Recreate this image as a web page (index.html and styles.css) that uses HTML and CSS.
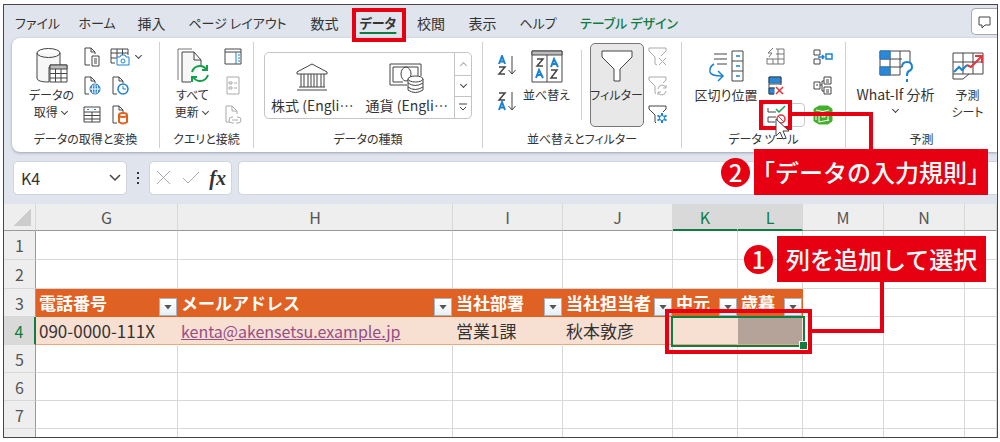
FILE: index.html
```html
<!DOCTYPE html>
<html lang="ja">
<head>
<meta charset="utf-8">
<title>データ - Excel</title>
<link rel="stylesheet" href="styles.css">
</head>
<body>
<main class="window">
  <nav class="tabs">
    <div class="tab-list">
      <button class="tab tab-kana">ファイル</button>
      <button class="tab tab-kana">ホーム</button>
      <button class="tab">挿入</button>
      <button class="tab tab-kana">ページ レイアウト</button>
      <button class="tab">数式</button>
      <button class="tab tab-kana tab-active">データ</button>
      <button class="tab">校閲</button>
      <button class="tab">表示</button>
      <button class="tab tab-kana">ヘルプ</button>
      <button class="tab tab-kana tab-context">テーブル デザイン</button>
    </div>
    <button class="comment" aria-label="コメント">
      <svg width="14" height="14" viewBox="0 0 14 14"><path d="M1 2h11v8H7l-3 3v-3H1z"/></svg>
    </button>
  </nav>

  <section class="ribbon">
    <div class="group">
      <div class="group-body">
        <button class="big">
          <span class="big-icon"><svg width="34" height="38" viewBox="0 0 34 38"><path class="pale" d="M2 6v25c0 3 5 4 12 4V20h11V6"/><ellipse cx="13.500" cy="6" rx="11.500" ry="4.500"/><path class="paper" d="M15 18h17v17H15z"/><path class="dim" d="M15 18h17v4H15z"/><path d="M15 26.500h17M15 31h17M20.500 22v13M26 22v13"/></svg></span>
          <span>データの</span>
          <span>取得 <i class="chev"></i></span>
        </button>
        <div class="smalls smalls-three">
          <button class="small" aria-label="テキストから"><svg width="18" height="20" viewBox="0 0 18 20"><path d="M7 18H2V1h6l4 4v2M8 1v4h4"/><path class="paper" d="M9 9h7v10H9z"/><path d="M11 12h3M11 14h3M11 16h3"/></svg></button>
          <button class="small" aria-label="画像から"><svg width="20" height="18" viewBox="0 0 20 18"><path d="M5 15H1V1h17v6M1 5h17M1 10h6M7 1v8M12.500 1v6"/><path class="blue-line paper" d="M7 9h3l1-2h4l1 2h3v8H7z"/><circle class="blue-line" cx="13" cy="13" r="2"/></svg></button>
          <i class="chev"></i>
          <button class="small" aria-label="Web から"><svg width="18" height="20" viewBox="0 0 18 20"><path d="M6 18H2V1h6l4 4v2M8 1v4h4"/><circle class="blue" cx="12" cy="13" r="5"/><path class="white-line" d="M7 13h10M12 8v10M10 9q-2 4 0 8M14 9q2 4 0 8"/></svg></button>
          <button class="small" aria-label="最近使ったソース"><svg width="18" height="20" viewBox="0 0 18 20"><path d="M6 18H2V1h6l4 4v2M8 1v4h4"/><circle class="blue-line paper bold-thin" cx="12" cy="13" r="5"/><path class="blue-line" d="M12 10v3h3"/></svg></button>
          <span></span>
          <button class="small" aria-label="テーブルから"><svg width="18" height="18" viewBox="0 0 18 18"><path d="M1 1h16v15H1zM1 6h16M1 9.500h16M1 13h16M9 6v10"/><path class="blue-line" d="M4 3.500h2M11 3.500h2"/></svg></button>
          <button class="small" aria-label="既存の接続"><svg width="18" height="20" viewBox="0 0 18 20"><path d="M6 18H2V1h6l4 4v2M8 1v4h4"/><path class="orange-line paper" d="M8 10v7q4 3 8 0v-7"/><ellipse class="orange-line paper" cx="12" cy="10" rx="4" ry="2"/></svg></button>
        </div>
      </div>
      <div class="group-name">データの取得と変換</div>
    </div>

    <div class="group">
      <div class="group-body">
        <button class="big">
          <span class="big-icon"><svg width="32" height="36" viewBox="0 0 32 36"><path class="dim-line" d="M1 32V1h14"/><path class="pale" d="M14 34H5V4h12l7 8v6"/><path d="M17 4v8h7"/><path class="green-line" d="M15 24q2-6 8-6 4 0 7 4M30 17v5h-5M31 27q-2 6-8 6-4 0-7-4M15 34v-5h5"/></svg></span>
          <span>すべて</span>
          <span>更新 <i class="chev"></i></span>
        </button>
        <div class="smalls">
          <button class="small" aria-label="クエリと接続"><svg width="18" height="17" viewBox="0 0 18 17"><path d="M1 1h16v15H1zM1 4h16"/><path class="blue-line" d="M12 4v12M14 7h2M14 10h2M14 13h2"/></svg></button>
          <button class="small" aria-label="プロパティ"><svg class="off" width="14" height="19" viewBox="0 0 14 19"><path d="M1 1h12v17H1zM3 6h3v2H3zM3 11h3v2H3zM8 7h3M8 12h3"/></svg></button>
          <button class="small" aria-label="リンクの編集"><svg class="off" width="18" height="20" viewBox="0 0 18 20"><path d="M6 17H2V1h6l5 5v3M8 1v5h5"/><path d="M9 12H8q-3 0-3 3t3 3h2M13 12h1q3 0 3 3t-3 3h-2M8 15h6"/></svg></button>
        </div>
      </div>
      <div class="group-name">クエリと接続</div>
    </div>

    <div class="group">
      <div class="group-body">
        <div class="gallery">
          <button class="type"><svg width="34" height="30" viewBox="0 0 34 30"><path d="M2 10 17 2l15 8v2H2zM6 12v13M9 12v13M13 12v13M16 12v13M19 12v13M22 12v13M26 12v13M29 12v13M4 25h26M2 28h30"/></svg><span>株式 (Engli…</span></button>
          <button class="type"><svg width="36" height="32" viewBox="0 0 36 32"><path d="M18 23H1V2h31v12M14 20H4V5h25v9"/><ellipse cx="17" cy="12" rx="5" ry="7"/><path class="paper" d="M19 17v11q7 5 15 0V17"/><ellipse class="paper" cx="26.500" cy="17" rx="7.500" ry="3"/><path d="M19 21q7 5 15 0M19 25q7 5 15 0"/></svg><span>通貨 (Engli…</span></button>
          <div class="scroller">
            <button aria-label="上へ"><i class="chev chev-up"></i></button>
            <button aria-label="下へ"><i class="chev"></i></button>
            <button aria-label="その他"><svg width="10" height="9" viewBox="0 0 10 9"><path d="M1 1h8M2 4l3 3 3-3"/></svg></button>
          </div>
        </div>
      </div>
      <div class="group-name">データの種類</div>
    </div>

    <div class="group">
      <div class="group-body">
        <div class="sorts">
          <button class="small" aria-label="昇順"><svg width="20" height="22" viewBox="0 0 20 22"><path class="blue-line bold" d="M2 9 5 1l3 8M3 6.500h4"/><path class="bold-thin" d="M2 12h6l-6 7h6"/><path d="M15 1v17M11.500 15l3.500 4 3.500-4"/></svg></button>
          <button class="small" aria-label="降順"><svg width="20" height="22" viewBox="0 0 20 22"><path class="bold-thin" d="M2 2h6L2 9h6"/><path class="blue-line bold" d="M2 19l3-8 3 8M3 16.500h4"/><path d="M15 1v17M11.500 15l3.500 4 3.500-4"/></svg></button>
        </div>
        <button class="big">
          <span class="big-icon"><svg width="32" height="33" viewBox="0 0 32 33"><path d="M1 1h30v31H1zM16 5v27"/><path class="dim" d="M1 1h30v4H1z"/><path class="bold-thin" d="M6 9h6l-6 7h6M20 20h6l-6 8h6"/><path class="blue-line bold" d="M20 17l3-8 4 8M21 14h5M5 28l3-8 4 8M6 25h5"/></svg></span>
          <span>並べ替え</span>
        </button>
        <i class="rule"></i>
        <button class="big big-pressed">
          <span class="big-icon"><svg width="32" height="34" viewBox="0 0 32 34"><path class="paper" d="M1 2h30v6L19 20v12h-6V20L1 8z"/></svg></span>
          <span>フィルター</span>
        </button>
        <div class="smalls">
          <button class="small" aria-label="クリア"><svg class="off" width="20" height="20" viewBox="0 0 20 20"><path d="M9 18l-2-1v-7L1 4V1h17v3l-5 5"/><path d="M11 11l7 7M18 11l-7 7"/></svg></button>
          <button class="small" aria-label="再適用"><svg class="off" width="20" height="20" viewBox="0 0 20 20"><path d="M8 18l-1-1v-7L1 4V1h17v3l-3 3"/><path d="M10 13q1-4 4-4t4 3v-3M18 12h-3M18 15q-1 4-4 4t-4-3v3M10 16h3"/></svg></button>
          <button class="small" aria-label="詳細設定"><svg width="20" height="20" viewBox="0 0 20 20"><path d="M8 18l-1-1v-7L1 4V1h17v3l-3 3"/><path class="blue-line bold" d="M14 8v10M9.500 10.500l9 5M9.500 15.500l9-5"/><circle class="blue-line paper" cx="14" cy="13" r="2.500"/></svg></button>
        </div>
      </div>
      <div class="group-name">並べ替えとフィルター</div>
    </div>

    <div class="group">
      <div class="group-body">
        <button class="big big-wide">
          <span class="big-icon"><svg width="36" height="34" viewBox="0 0 36 34"><path d="M6 5h13M6 10h13M9 15h10M24 2h11v30H24zM24 12h11M24 22h11"/><path class="blue-line bold-thin" d="M28 7h4M28 17h4M28 27h4M6 15q-5 3-4 8 1 4 12 4M10 22l5 5-5 5"/></svg></span>
          <span>区切り位置</span>
        </button>
        <div class="smalls smalls-two">
          <button class="small" aria-label="フラッシュ フィル"><svg class="off off-dark" width="20" height="20" viewBox="0 0 20 20"><path d="M10 2h8v15H1v-6M1 12h17M7 12v5M12 2v15M10 7h8M7 1 2 6h4L3 10"/></svg></button>
          <button class="small" aria-label="統合"><svg width="20" height="18" viewBox="0 0 20 18"><path d="M1 2h6v5H1zM1 11h6v5H1z"/><path class="blue-line bold-thin" d="M5 9h6M9 7l2 2-2 2M13 6h6v5h-6z"/></svg></button>
          <button class="small" aria-label="重複の削除"><svg width="18" height="20" viewBox="0 0 18 20"><path class="blue" d="M2 1h12v6H2zM2 12h5v6H2z"/><path d="M2 1h12v8M2 1v17h5M2 8h12M2 12h6"/><path class="red-line bold-thin" d="M9 11l7 7M16 11l-7 7"/></svg></button>
          <button class="small" aria-label="リレーションシップ"><svg width="20" height="20" viewBox="0 0 20 20"><path d="M1 6h6v7H1zM11 1h7v7h-7zM11 11h7v7h-7zM7 9h2M9 5v10M9 5h2M9 15h2M3 9h2M13 4h3M13 6h3M13 14h3M13 16h3"/></svg></button>
          <button class="small small-split" aria-label="データの入力規則"><svg width="20" height="20" viewBox="0 0 20 20"><path d="M9 7H1V3M9 12H1v5h7"/><path class="green-line bold-thin" d="M9 4l3 3 6-6"/><circle class="red-line bold-thin" cx="14" cy="14" r="4"/><path class="red-line" d="M11 11l6 6"/></svg></button>
          <button class="small" aria-label="データ モデル"><svg width="20" height="20" viewBox="0 0 20 20"><path class="lime" d="M1 4 6 1h9l4 3v12l-4 3H6l-5-3z"/><path class="white-line" d="M3 5q7 3 13 0M3 8v7M6 8v9l10-2M9 6v6h3V7M13 10h4M15 8v8"/></svg></button>
        </div>
      </div>
      <div class="group-name">データ ツール</div>
    </div>

    <div class="group">
      <div class="group-body">
        <button class="big big-whatif">
          <span class="big-icon"><svg width="36" height="36" viewBox="0 0 36 36"><path d="M2 3h30v12M2 11h22M2 19h22M2 27h20M12 3v24M22 3v24M2 3v24"/><path class="blue" d="M2 3h10v8H2zM2 19h10v8H2z"/><path class="blue-line bold" d="M24 19q0-5 5-5t5 5q0 3-3 4-2 1-2 5M29 31v3"/></svg></span>
          <span>What-If 分析</span>
          <i class="chev"></i>
        </button>
        <button class="big">
          <span class="big-icon"><svg width="34" height="32" viewBox="0 0 34 32"><path d="M2 3h30v21H18l-6 5H2zM2 12h30M2 24h16M12 3v21M22 3v21"/><path class="blue-line bold" d="m3 22 5-5 3 3 5-5"/><path class="red-line bold" d="m16 15 4 2 10-10M24 6h7v7"/></svg></span>
          <span>予測</span>
          <span>シート</span>
        </button>
      </div>
      <div class="group-name">予測</div>
    </div>
  </section>

  <section class="formula">
    <div class="name-box">
      <input class="name-input" aria-label="名前ボックス" value="K4">
      <button class="name-drop" aria-label="一覧"><svg width="12" height="8" viewBox="0 0 12 8"><path class="bold-thin" d="m1 1 5 5 5-5"/></svg></button>
    </div>
    <svg class="dots" width="4" height="14" viewBox="0 0 4 14"><path class="ink" d="M1 1h2v2H1zM1 6h2v2H1zM1 11h2v2H1z"/></svg>
    <div class="entry">
      <button aria-label="キャンセル"><svg class="off" width="16" height="16" viewBox="0 0 16 16"><path d="m1 1 13 13M14 1 1 14"/></svg></button>
      <button aria-label="入力"><svg class="off" width="18" height="14" viewBox="0 0 18 14"><path d="m1 7 5 5L17 1"/></svg></button>
      <button class="fx">fx</button>
    </div>
    <input class="formula-input" aria-label="数式バー">
  </section>

  <table class="sheet">
    <colgroup>
      <col class="w-head"><col class="w-g"><col class="w-h"><col class="w-i"><col class="w-i"><col class="w-k"><col class="w-k"><col class="w-m"><col class="w-m"><col>
    </colgroup>
    <thead>
      <tr><th class="corner"></th><th>G</th><th>H</th><th>I</th><th>J</th><th class="picked">K</th><th class="picked">L</th><th>M</th><th>N</th><th></th></tr>
    </thead>
    <tbody>
      <tr class="tall"><th>1</th><td></td><td></td><td></td><td></td><td></td><td></td><td></td><td></td><td></td></tr>
      <tr class="tall"><th>2</th><td></td><td></td><td></td><td></td><td></td><td></td><td></td><td></td><td></td></tr>
      <tr>
        <th>3</th>
        <td class="field"><div>電話番号<button class="filter" aria-label="電話番号の絞り込み"></button></div></td>
        <td class="field"><div>メールアドレス<button class="filter" aria-label="メールアドレスの絞り込み"></button></div></td>
        <td class="field"><div>当社部署<button class="filter" aria-label="当社部署の絞り込み"></button></div></td>
        <td class="field"><div>当社担当者<button class="filter" aria-label="当社担当者の絞り込み"></button></div></td>
        <td class="field"><div>中元<button class="filter" aria-label="中元の絞り込み"></button></div></td>
        <td class="field"><div>歳暮<button class="filter" aria-label="歳暮の絞り込み"></button></div></td>
        <td></td><td></td><td></td>
      </tr>
      <tr>
        <th class="picked-row">4</th>
        <td class="data">090-0000-111X</td>
        <td class="data"><a href="mailto:kenta@akensetsu.example.jp">kenta@akensetsu.example.jp</a></td>
        <td class="data">営業1課</td>
        <td class="data">秋本敦彦</td>
        <td class="data"></td>
        <td class="data data-shaded"></td>
        <td></td><td></td><td></td>
      </tr>
      <tr><th>5</th><td></td><td></td><td></td><td></td><td></td><td></td><td></td><td></td><td></td></tr>
      <tr><th>6</th><td></td><td></td><td></td><td></td><td></td><td></td><td></td><td></td><td></td></tr>
      <tr><th>7</th><td></td><td></td><td></td><td></td><td></td><td></td><td></td><td></td><td></td></tr>
      <tr><th></th><td></td><td></td><td></td><td></td><td></td><td></td><td></td><td></td><td></td></tr>
    </tbody>
  </table>

  <div class="selection"></div>
  <div class="mark mark-tab"></div>
  <div class="mark mark-tool"></div>
  <div class="mark mark-cells"></div>
  <div class="wire wire-tool"></div>
  <div class="wire wire-cells"></div>
  <svg class="cursor" width="16" height="24" viewBox="0 0 16 24"><path class="paper" d="M2 1v17l4-4 3 7 3-1-3-7h6z"/></svg>
  <div class="step step-two"><span class="step-number">2</span><span class="step-text">「データの入力規則」</span></div>
  <div class="step step-one"><span class="step-number">1</span><span class="step-text">列を追加して選択</span></div>
</main>
</body>
</html>
```

FILE: styles.css
```css
* { box-sizing: border-box; }

body {
  margin: 0;
  height: 100vh;
  padding: 4px 2px 4px 3px;
  overflow: hidden;
  background: #fff;
  color: #333;
  font: 12px/16px "Noto Sans CJK JP", sans-serif;
}

button, input {
  margin: 0;
  padding: 0;
  border: 0;
  background: none;
  color: inherit;
  font: inherit;
}

svg { display: block; fill: none; stroke: #444; stroke-width: 1; }
.paper { fill: #fff; }
.pale { fill: #f7f7f7; }
.dim { fill: #bbb; }
.dim-line { stroke: #777; }
.blue { fill: #2b88d8; stroke: #2b78c0; }
.blue-line { stroke: #1a82d2; }
.green-line { stroke: #16a04a; stroke-width: 2; }
.orange-line { stroke: #e0601c; stroke-width: 2; }
.red-line { stroke: #e5353b; }
.white-line { stroke: #fff; }
.lime { fill: #43b02a; stroke: #43b02a; }
.bold { stroke-width: 2; }
.bold-thin { stroke-width: 1.5; }
.ink { fill: #333; stroke: none; }
.off { stroke: #aaa; }
.off-dark { stroke: #777; }

.window {
  position: relative;
  height: 100%;
  overflow: hidden;
  border: 1px solid #4a4446;
  background: #dfe4ed;
}

.tabs { display: flex; justify-content: space-between; height: 33px; padding-left: 3px; }
.tab-list {
  display: grid;
  grid-template-columns: 61px 58px 51px 121px 53px 54px 52px 51px 60px 122px;
}
.tab {
  padding-top: 3px;
  font-size: 14px;
  white-space: nowrap;
  font-feature-settings: "palt";
}
.tab-kana { font-size: 13px; }
.tab-active {
  font-weight: 700;
  text-decoration: underline 2px #107c41;
  text-underline-offset: 4px;
}
.tab-context { color: #107c41; font-weight: 500; }
.comment {
  display: grid;
  place-items: center;
  width: 26px;
  height: 27px;
  margin-top: 3px;
  border: 1px solid #aaa;
  border-right: 0;
  border-radius: 5px 0 0 5px;
  background: #fff;
}

.ribbon {
  display: grid;
  grid-template-columns: 148px 94px 229px 199px 164px 1fr;
  margin-left: 8px;
  padding: 4px 0;
  border-radius: 8px 0 0 8px;
  background: #fff;
  box-shadow: 0 1px 3px #9aa3b5;
  font-feature-settings: "palt";
}
.group { border-right: 1px solid #d0d0d0; }
.group:last-child { border-right: 0; }
.group-body { display: flex; justify-content: center; height: 88px; }
.group-name { line-height: 18px; text-align: center; white-space: nowrap; }

.big { display: flex; flex-direction: column; align-items: center; width: 52px; padding-top: 4px; line-height: 17px; white-space: nowrap; }
.big-wide { width: 72px; font-size: 13px; }
.big-whatif { width: 92px; font-size: 14px; }
.big-icon { display: grid; place-items: center; height: 40px; }
.big-pressed {
  width: 54px;
  margin: 1px 0 3px;
  padding-top: 2px;
  border: 1px solid #777;
  border-radius: 5px;
  background: #e8e8e8;
}
.big > .chev { margin-top: 4px; }
.rule { width: 1px; height: 70px; margin: 8px 8px 0; background: #d0d0d0; }

.smalls { display: grid; grid-template-columns: 28px; grid-auto-rows: 29px; align-items: center; }
.smalls-three { grid-template-columns: 28px 28px 12px; }
.smalls-two { grid-template-columns: 47px 28px; }
.small { display: grid; place-items: center; width: 28px; height: 28px; }
.small-split {
  justify-content: start;
  width: 43px;
  height: 24px;
  padding-left: 4px;
  border: 1px solid #c8c8c8;
  border-radius: 4px;
}
.sorts { display: flex; flex-direction: column; gap: 8px; padding-top: 10px; }

.chev {
  display: inline-block;
  width: 5px;
  height: 5px;
  margin: 0 2px 3px;
  border: solid #444;
  border-width: 0 1px 1px 0;
  transform: rotate(45deg);
}
.chev-up { margin: 3px 0 0; border-color: #aaa; transform: rotate(225deg); }

.gallery {
  display: grid;
  grid-template-columns: 1fr 1fr 17px;
  width: 208px;
  height: 67px;
  margin-top: 10px;
  border: 1px solid #c4c4c4;
  border-radius: 5px;
}
.type {
  display: flex;
  flex-direction: column;
  align-items: center;
  justify-content: space-between;
  padding: 9px 0 5px;
  font-size: 14px;
  white-space: nowrap;
}
.scroller { display: grid; grid-template-rows: 1fr 1fr 1fr; border-left: 1px solid #c4c4c4; }
.scroller button { display: grid; place-items: center; }
.scroller button + button { border-top: 1px solid #c4c4c4; }

.formula { display: flex; align-items: center; height: 52px; padding-left: 9px; }
.name-box, .entry, .formula-input {
  height: 34px;
  border: 1px solid #d0d4dc;
  border-radius: 5px;
  background: #fff;
}
.name-box { display: flex; align-items: center; width: 114px; padding: 0 5px 0 7px; }
.name-input { flex: 1; min-width: 0; font-size: 16px; line-height: 24px; }
.dots { margin: 0 9px; }
.entry { display: flex; align-items: center; justify-content: space-between; width: 83px; padding: 0 5px 0 6px; }
.fx { font: italic 700 20px/24px "Liberation Serif", serif; }
.formula-input { flex: 1; min-width: 0; margin-left: 6px; padding: 0 8px; border-right: 0; border-radius: 5px 0 0 5px; }

.sheet {
  width: 100%;
  table-layout: fixed;
  border-collapse: separate;
  border-spacing: 0;
  background: #fff;
  font-size: 17px;
  line-height: 24px;
}
.w-head { width: 32px; }
.w-g { width: 142px; }
.w-h { width: 275px; }
.w-i { width: 110px; }
.w-k { width: 65px; }
.w-m { width: 81px; }
.sheet tbody tr { height: 28px; }
.sheet tbody .tall { height: 29px; }
.sheet th, .sheet td { padding: 0; border: solid #d8d8d8; border-width: 0 1px 1px 0; }
.sheet th { background: #eee; color: #555; font-size: 16px; font-weight: 400; }
.sheet tbody th { border-right-color: #999; }
.sheet thead th { height: 27px; border-bottom-color: #999; }
.sheet .corner { background: linear-gradient(135deg, #eee 50%, #ccc 50%) 8px 5px / 19px 17px no-repeat #eee; }
.sheet thead .picked { border-bottom: 2px solid #107c41; background: #d9d9d9; color: #107c41; }
.sheet tbody .picked-row { border-right: 2px solid #107c41; background: #d9d9d9; color: #107c41; }
.sheet .field { border-color: #df6124; background: #df6124; color: #fff; font-weight: 700; white-space: nowrap; }
.field div { display: flex; align-items: center; justify-content: space-between; height: 27px; padding-left: 3px; }
.filter {
  display: grid;
  place-items: center;
  flex: none;
  align-self: end;
  width: 18px;
  height: 18px;
  margin-left: -3px;
  border: 1px solid #a9b4c0;
  background: linear-gradient(#fff, #e8f0f6);
}
.filter::after {
  content: "";
  width: 8px;
  height: 5px;
  background: #555;
  clip-path: polygon(0 0, 100% 0, 50% 100%);
}
.sheet .data { padding-left: 3px; border-color: #f7dfd2; border-bottom-color: #f0a47c; background: #f7dfd2; white-space: nowrap; }
.sheet .data-shaded { background: #b5a399; }
.data a { color: #954f87; font-size: 16px; }

/* Overlays drawn over the window */
.selection { position: absolute; left: 667px; top: 311px; width: 134px; height: 31px; border: 2px solid #107c41; }
.selection::after {
  content: "";
  position: absolute;
  right: -4px;
  bottom: -4px;
  width: 7px;
  height: 7px;
  border: solid #fff;
  border-width: 1px 0 0 1px;
  background: #107c41;
}
.mark { position: absolute; border: 4px solid #e60012; }
.mark-tab { left: 348px; top: 3px; width: 54px; height: 34px; }
.mark-tool { left: 755px; top: 95px; width: 33px; height: 30px; }
.mark-cells { left: 661px; top: 304px; width: 147px; height: 45px; }
.wire { position: absolute; border: 0 solid #e60012; }
.wire-tool { left: 788px; top: 107px; width: 81px; height: 38px; border-width: 4px 4px 0 0; }
.wire-cells { left: 808px; top: 276px; width: 72px; height: 52px; border-width: 0 4px 4px 0; }
.cursor { position: absolute; left: 770px; top: 113px; }
.step { position: absolute; display: flex; align-items: center; gap: 4px; color: #fff; }
.step-two { left: 717px; top: 144px; }
.step-one { left: 740px; top: 231px; }
.step-number {
  width: 29px;
  height: 29px;
  border-radius: 50%;
  background: #e60012;
  font-size: 24px;
  font-weight: 500;
  line-height: 28px;
  text-align: center;
}
.step-text {
  padding: 0 9px;
  background: #e60012;
  font-size: 24px;
  font-weight: 500;
  line-height: 46px;
  white-space: nowrap;
  font-feature-settings: "halt";
}
```
